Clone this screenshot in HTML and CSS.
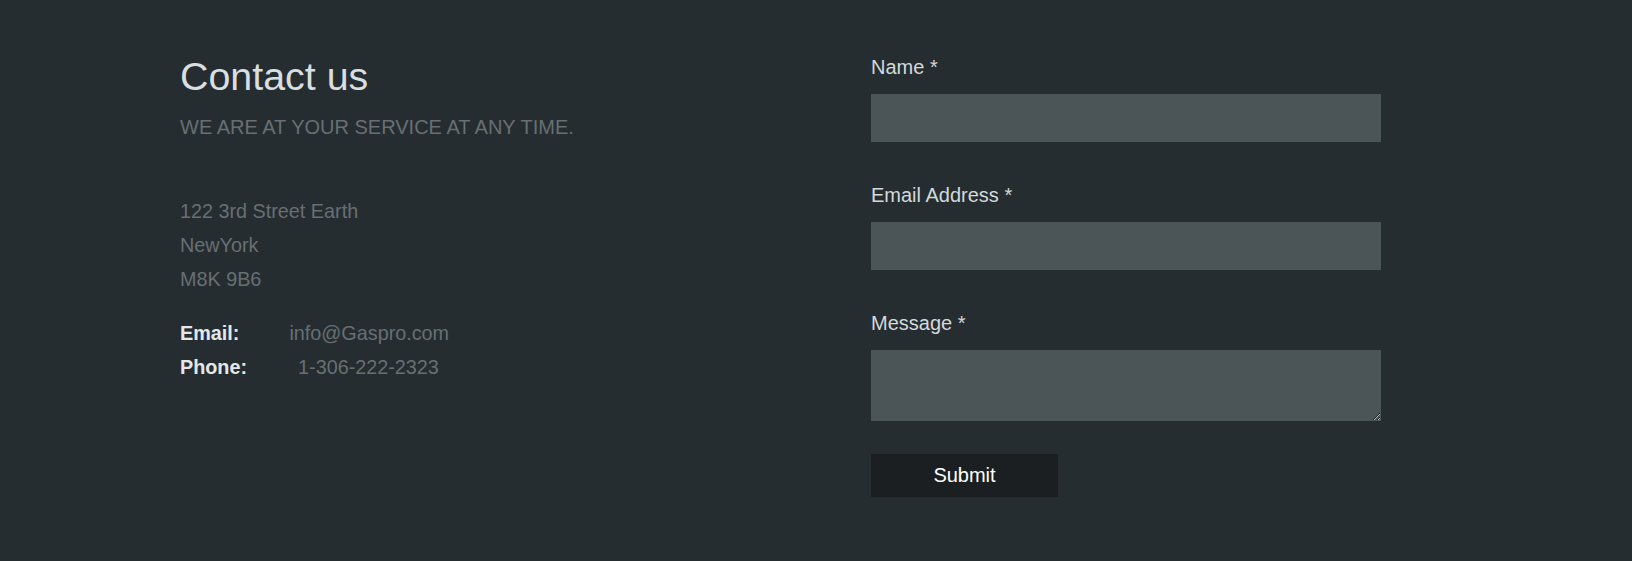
FILE: index.html
```html
<!DOCTYPE html>
<html lang="en">
<head>
<meta charset="utf-8">
<title>Contact us</title>
<link rel="stylesheet" href="styles.css">
</head>
<body>
<section class="contact">
  <div class="info">
    <h1 class="title">Contact us</h1>
    <p class="subtitle">WE ARE AT YOUR SERVICE AT ANY TIME.</p>
    <div class="address">
      <div>122 3rd Street Earth</div>
      <div>NewYork</div>
      <div>M8K 9B6</div>
    </div>
    <div class="details">
      <div class="row"><strong class="key">Email:</strong><span class="val val-email">info@Gaspro.com</span></div>
      <div class="row"><strong class="key">Phone:</strong><span class="val val-phone">1-306-222-2323</span></div>
    </div>
  </div>
  <form class="form" onsubmit="return false;">
    <div class="field">
      <label class="label" for="name">Name *</label>
      <input class="input" id="name" type="text">
    </div>
    <div class="field">
      <label class="label" for="email">Email Address *</label>
      <input class="input" id="email" type="email">
    </div>
    <div class="field">
      <label class="label" for="msg">Message *</label>
      <textarea class="textarea" id="msg"></textarea>
    </div>
    <button class="submit" type="submit">Submit</button>
  </form>
</section>
</body>
</html>
```
FILE: styles.css
```css
html, body {
  margin: 0;
  padding: 0;
}
body {
  background: #252d31;
  font-family: "Liberation Sans", Arial, sans-serif;
  width: 1632px;
  height: 561px;
  overflow: hidden;
}
.contact {
  display: grid;
  grid-template-columns: 691px 510px;
  padding: 52px 0 0 180px;
}
.title {
  margin: 0;
  font-size: 39.4px;
  line-height: 48px;
  font-weight: normal;
  color: #d9dee1;
}
.subtitle {
  margin: 15px 0 0;
  font-size: 20px;
  line-height: 24px;
  color: #686f73;
}
.address {
  margin-top: 55px;
  font-size: 19.8px;
  line-height: 34px;
  color: #686f73;
}
.details {
  margin-top: 20px;
  font-size: 19.8px;
  line-height: 34px;
}
.row {
  display: flex;
}
.key {
  color: #e4e8ea;
  font-weight: bold;
}
.val {
  color: #686f73;
}
.val-email { margin-left: 50px; }
.val-phone { margin-left: 51px; }

.form {
  display: flex;
  flex-direction: column;
  margin-top: 3px;
}
.field {
  display: flex;
  flex-direction: column;
  margin-bottom: 41px;
}
.label {
  font-size: 20px;
  line-height: 24px;
  color: #d3d9dc;
  margin-bottom: 15px;
}
.input, .textarea {
  display: block;
  box-sizing: border-box;
  width: 510px;
  border: none;
  outline: none;
  background: #4b5457;
  margin: 0;
  padding: 0 12px;
  font-family: inherit;
  font-size: 18px;
  color: #d3d9dc;
}
.input {
  height: 48px;
}
.textarea {
  height: 71px;
  padding: 10px 12px;
  resize: vertical;
}
.field:last-of-type {
  margin-bottom: 33px;
}
.submit {
  width: 187px;
  height: 43px;
  border: none;
  background: #1b1f22;
  color: #ffffff;
  font-family: inherit;
  font-size: 20px;
  padding: 0;
  cursor: pointer;
}
```
